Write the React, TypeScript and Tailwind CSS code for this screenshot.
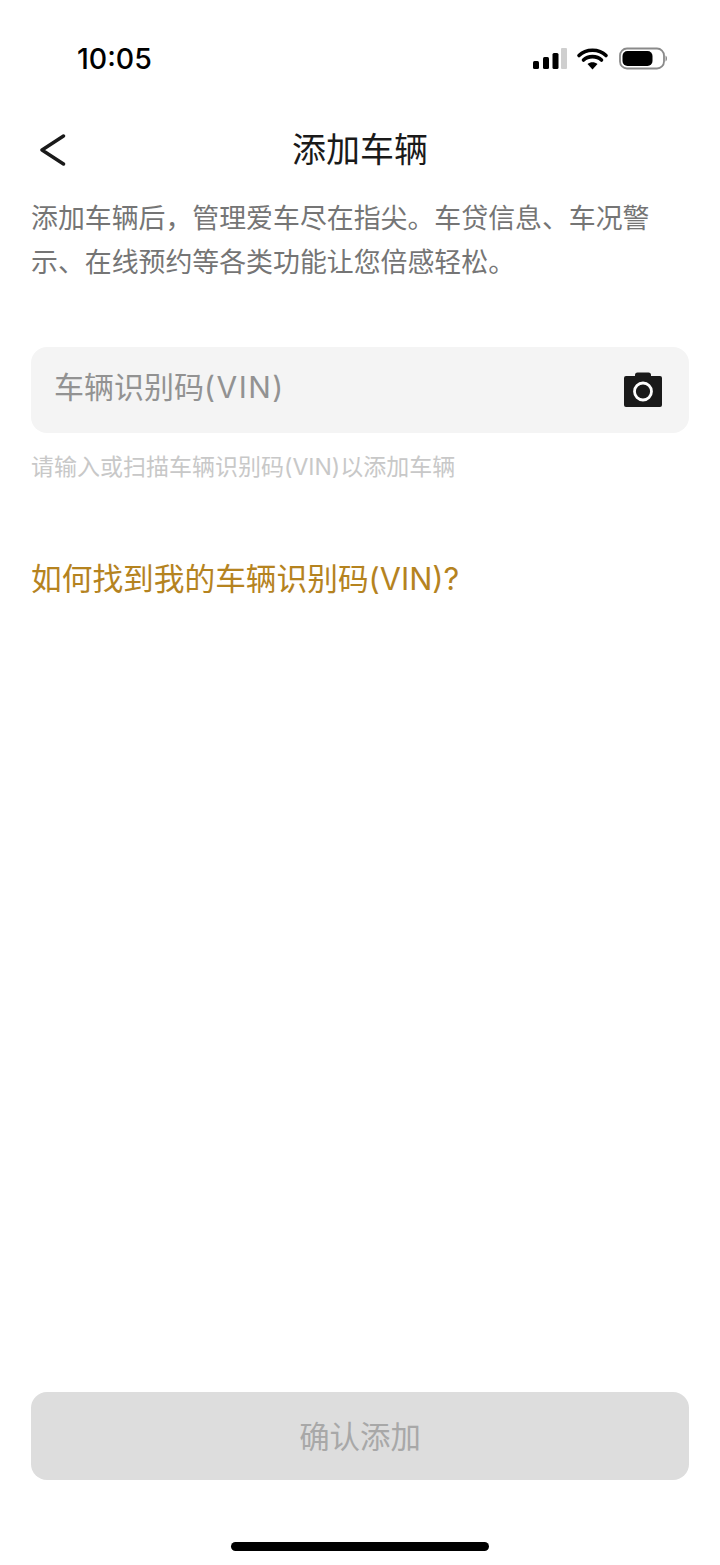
const cjk = "font-['Inter','Noto_Sans_CJK_SC','Noto_Sans',sans-serif]";

function StatusIcons() {
    return (
        <svg width="136" height="24" viewBox="0 0 136 24" className="block">
            {/* signal */}
            <rect x="0" y="14" width="6" height="8" rx="1.5" fill="#000" />
            <rect x="10" y="10" width="6" height="12" rx="1.5" fill="#000" />
            <rect x="19.5" y="6" width="6" height="16" rx="1.5" fill="#000" />
            <rect x="28" y="1" width="6" height="21" rx="1" fill="#cfcfcf" />
            {/* wifi */}
            <path d="M46 8.5 C53 1.5 66 1.5 73 8.5" fill="none" stroke="#000" strokeWidth="3.6" strokeLinecap="round" />
            <path d="M50.5 13 C55 8.5 64 8.5 68.500 13" fill="none" stroke="#000" strokeWidth="3.6" strokeLinecap="round" />
            <path d="M59.500 22.500 L54.500 17 C57.500 14.800 61.500 14.800 64.500 17 Z" fill="#000" />
            {/* battery */}
            <rect x="87" y="1.500" width="44" height="20" rx="7" fill="none" stroke="#8a8a8a" strokeWidth="1.800" />
            <rect x="89.500" y="4" width="30" height="15" rx="5" fill="#000" />
            <path d="M132.500 8.500 C134.500 9.500 134.500 13.500 132.500 14.500 Z" fill="#8a8a8a" />
        </svg>
    );
}

export default function App() {
    return (
        <div className={`w-[720px] h-[1565px] bg-white flex flex-col ${cjk}`}>
            {/* Status bar */}
            <div className="h-[116px] shrink-0 flex items-start justify-between pt-[41px] pl-[77px] pr-[51px]">
                <span className="font-['Inter',sans-serif] text-[28.5px] leading-[35px] font-[550] text-black">10:05</span>
                <div className="pt-[6px]">
                    <StatusIcons />
                </div>
            </div>

            {/* Nav */}
            <div className="h-[68px] shrink-0 relative flex items-center justify-center">
                <svg width="26" height="34" viewBox="0 0 26 34" className="absolute left-[40px] top-[17px]">
                    <path d="M23.500 3 L2 17 L23.500 31" fill="none" stroke="#1a1a1a" strokeWidth="3.400" strokeLinecap="round" strokeLinejoin="round" />
                </svg>
                <h1 className="text-[34px] leading-[70px] font-normal text-[#1a1a1a]">添加车辆</h1>
            </div>

            <div className="flex-1 flex flex-col px-[31px]">
                <p className="mt-[12px] text-[26.900px] leading-[44px] text-[#757575]">
                    添加车辆后，管理爱车尽在指尖。车贷信息、车况警示、在线预约等各类功能让您倍感轻松。
                </p>

                <div className="mt-[63px] h-[86px] rounded-[16px] bg-[#f4f4f4] flex items-center justify-between pl-[23px] pr-[27px]">
                    <span className="text-[30px] leading-[40px] text-[#929292] -translate-y-[3px]">
                        车辆识别码<span className="tracking-[1.500px]">(VIN)</span>
                    </span>
                    <svg width="38" height="35" viewBox="0 0 38 35" className="block -translate-y-[1px]">
                        <path d="M2 4 H11 V3 Q11 0.500 13.500 0.500 H24.500 Q27 0.500 27 3 V4 H36 Q38 4 38 6 V33 Q38 35 36 35 H2 Q0 35 0 33 V6 Q0 4 2 4 Z" fill="#1a1a1a" />
                        <circle cx="19" cy="19.500" r="8.500" fill="none" stroke="#fff" strokeWidth="2.800" />
                    </svg>
                </div>

                <p className="mt-[18px] text-[23px] leading-[32px] text-[#c8c8c8]">请输入或扫描车辆识别码(VIN)以添加车辆</p>

                <a className="mt-[74px] text-[30.700px] leading-[44px] text-[#b5831f]">如何找到我的车辆识别码(VIN)?</a>

                <div className="mt-auto mb-[85px] h-[88px] pt-[3px] rounded-[16px] bg-[#dddddd] flex items-center justify-center">
                    <span className="text-[30.400px] text-[#a8a8a8]">确认添加</span>
                </div>
            </div>

            {/* Home indicator */}
            <div className="absolute top-[1542px] left-[231px] w-[258px] h-[9px] rounded-full bg-black" />
        </div>
    );
}
